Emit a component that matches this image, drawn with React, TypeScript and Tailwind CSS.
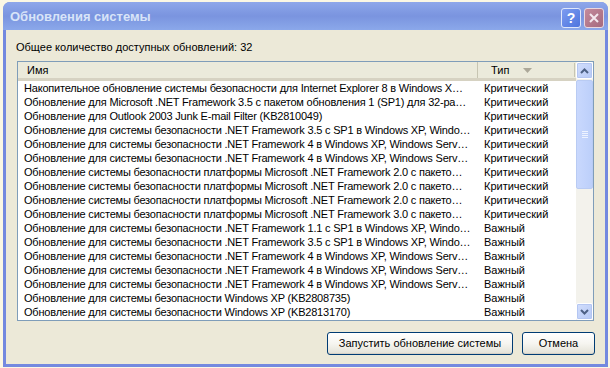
const rows: [string, string][] = [
  ["Накопительное обновление системы безопасности для Internet Explorer 8 в Windows X…", "Критический"],
  ["Обновление для Microsoft .NET Framework 3.5 с пакетом обновления 1 (SP1) для 32-ра…", "Критический"],
  ["Обновление для Outlook 2003 Junk E-mail Filter (KB2810049)", "Критический"],
  ["Обновление для системы безопасности .NET Framework 3.5 с SP1 в Windows XP, Windo…", "Критический"],
  ["Обновление для системы безопасности .NET Framework 4 в Windows XP, Windows Serv…", "Критический"],
  ["Обновление для системы безопасности .NET Framework 4 в Windows XP, Windows Serv…", "Критический"],
  ["Обновление системы безопасности платформы Microsoft .NET Framework 2.0 с пакето…", "Критический"],
  ["Обновление системы безопасности платформы Microsoft .NET Framework 2.0 с пакето…", "Критический"],
  ["Обновление системы безопасности платформы Microsoft .NET Framework 2.0 с пакето…", "Критический"],
  ["Обновление системы безопасности платформы Microsoft .NET Framework 3.0 с пакето…", "Критический"],
  ["Обновление для системы безопасности .NET Framework 1.1 с SP1 в Windows XP, Windo…", "Важный"],
  ["Обновление для системы безопасности .NET Framework 3.5 с SP1 в Windows XP, Windo…", "Важный"],
  ["Обновление для системы безопасности .NET Framework 4 в Windows XP, Windows Serv…", "Важный"],
  ["Обновление для системы безопасности .NET Framework 4 в Windows XP, Windows Serv…", "Важный"],
  ["Обновление для системы безопасности .NET Framework 4 в Windows XP, Windows Serv…", "Важный"],
  ["Обновление для системы безопасности Windows XP (KB2808735)", "Важный"],
  ["Обновление для системы безопасности Windows XP (KB2813170)", "Важный"],
];

function ScrollButton({ up }: { up?: boolean }) {
  return (
    <div className="h-[17px] w-[17px] rounded-[2px] border border-white bg-gradient-to-br from-[#d2defc] to-[#b6c9f6] flex items-center justify-center shadow-[inset_0_0_0_1px_#b4c6f2]">
      <svg width="9" height="6" viewBox="0 0 9 6">
        <path d={up ? "M1 5 L4.5 1.5 L8 5" : "M1 1 L4.5 4.5 L8 1"} stroke="#4d6185" strokeWidth="2" fill="none" />
      </svg>
    </div>
  );
}

function XpButton({ label, className }: { label: string; className: string }) {
  return (
    <div
      className={
        "h-[23px] rounded-[3px] border border-[#003c74] bg-gradient-to-b from-[#ffffff] via-[#f6f5f0] to-[#e3e1d6] flex items-center justify-center text-[11px] text-black shadow-[inset_0_-1px_0_#d6d0c5] " +
        className
      }
    >
      {label}
    </div>
  );
}

export default function App() {
  return (
    <div className="w-[610px] h-[368px] bg-[#fbf7e4] overflow-hidden pl-[3px] pt-[2px] font-['Liberation_Sans',Arial,sans-serif]">
      <div className="w-[605px] h-[365px] flex flex-col rounded-t-[7px] bg-[#7489df]">
        {/* Title bar */}
        <div className="h-[28px] rounded-t-[7px] bg-gradient-to-b from-[#8ea7ea] via-[#7a94df] to-[#8ba8ea] flex items-center pl-[7px] pr-[4px]">
          <span className="text-[13px] font-bold text-[#d8e4f8] pt-[2px] flex-1">Обновления системы</span>
          <div className="flex gap-[3px] pt-[4px]">
            <div className="h-[20px] w-[20px] rounded-[3px] border border-[#dfe7fb] bg-gradient-to-br from-[#7d9cf0] to-[#4e74de] flex items-center justify-center text-white font-bold text-[14px]">
              ?
            </div>
            <div className="h-[20px] w-[20px] rounded-[3px] border border-[#ead7de] bg-gradient-to-br from-[#c48a9c] to-[#a56a7e] flex items-center justify-center">
              <svg width="10" height="10" viewBox="0 0 10 10">
                <path d="M1 1 L9 9 M9 1 L1 9" stroke="#f4e8ee" strokeWidth="2" />
              </svg>
            </div>
          </div>
        </div>

        {/* Client area */}
        <div className="flex-1 mx-[3px] mb-[3px] bg-[#ece9d8] flex flex-col text-[11px] text-black">
          <div className="pl-[10px] pt-[11px] h-[31px] leading-[13px]">Общее количество доступных обновлений: 32</div>

          <div className="mx-[11px] h-[260px] border border-[#7f9db9] bg-white flex">
            <div className="flex-1 flex flex-col min-w-0">
              {/* Header */}
              <div className="h-[19px] flex items-center bg-[#ebeadb] border-b-[3px] border-[#d6d2c2] shrink-0">
                <div className="w-[460px] pl-[9px] h-full flex items-center border-r border-[#c7c5b2]">Имя</div>
                <div className="flex-1 pl-[13px] flex items-center gap-[14px] h-full">
                  <span>Тип</span>
                  <svg width="9" height="5" viewBox="0 0 9 5">
                    <path d="M0 0 H9 L4.5 5 Z" fill="#aca899" />
                  </svg>
                  <div className="ml-auto h-[14px] w-px bg-[#c7c5b2] mr-[1px]" />
                </div>
              </div>
              {/* Rows */}
              {rows.map(([name, type], i) => (
                <div key={i} className="h-[14px] flex items-center leading-[14px]">
                  <div className="w-[460px] pl-[6px] pr-[2px] whitespace-nowrap overflow-hidden text-ellipsis tracking-[-0.2px]">{name}</div>
                  <div className="pl-[6px] whitespace-nowrap">{type}</div>
                </div>
              ))}
            </div>

            {/* Scrollbar */}
            <div className="w-[17px] bg-[#f3f2ec] flex flex-col">
              <ScrollButton up />
              <div className="mt-[1px] h-[109px] rounded-[2px] border border-[#b9cbf3] bg-gradient-to-r from-[#c9d8fd] to-[#bccffa] flex items-center justify-center">
                <div className="flex flex-col gap-[1px]">
                  <div className="w-[6px] h-px bg-[#eef3ff]" />
                  <div className="w-[6px] h-px bg-[#eef3ff]" />
                  <div className="w-[6px] h-px bg-[#eef3ff]" />
                  <div className="w-[6px] h-px bg-[#eef3ff]" />
                </div>
              </div>
              <div className="flex-1" />
              <ScrollButton />
            </div>
          </div>

          <div className="flex justify-end gap-[9px] pr-[10px] mt-[11px]">
            <XpButton label="Запустить обновление системы" className="w-[186px]" />
            <XpButton label="Отмена" className="w-[73px]" />
          </div>
        </div>
      </div>
    </div>
  );
}
